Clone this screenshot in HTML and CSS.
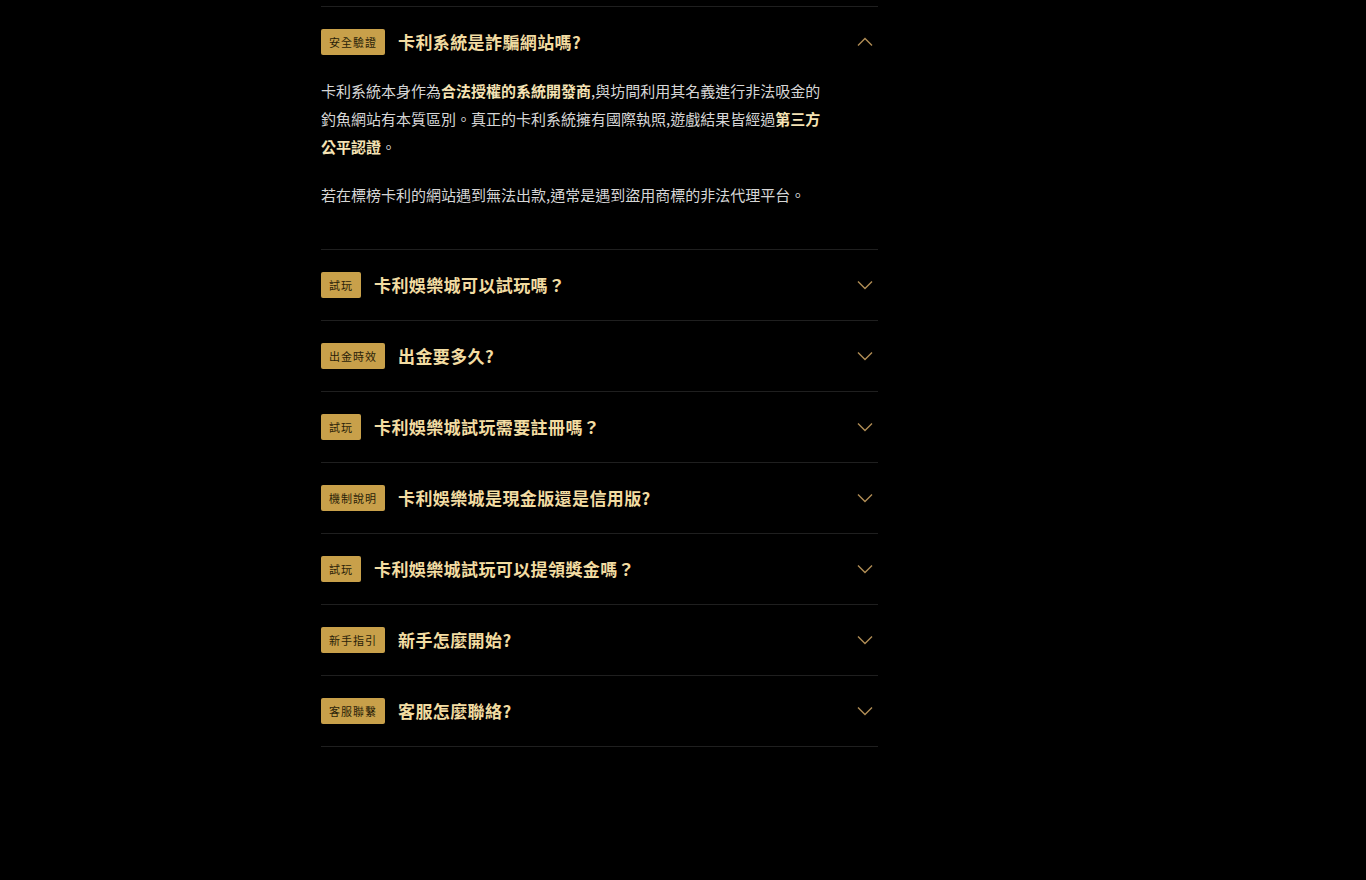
FILE: index.html
```html
<!DOCTYPE html>
<html lang="zh-TW">
<head>
<meta charset="utf-8">
<title>FAQ</title>
<link rel="stylesheet" href="styles.css">
</head>
<body>
<main class="page">
  <section class="faq">
    <div class="item open">
      <div class="head">
        <span class="badge">安全驗證</span>
        <h3 class="title">卡利系統是詐騙網站嗎?</h3>
        <svg class="chev" viewBox="0 0 16 10" width="16" height="10"><path d="M1 8.5 L8 1.5 L15 8.5"/></svg>
      </div>
      <div class="body">
        <p>卡利系統本身作為<strong>合法授權的系統開發商</strong>,與坊間利用其名義進行非法吸金的釣魚網站有本質區別。真正的卡利系統擁有國際執照,遊戲結果皆經過<strong>第三方公平認證</strong>。</p>
        <p>若在標榜卡利的網站遇到無法出款,通常是遇到盜用商標的非法代理平台。</p>
      </div>
    </div>
    <div class="item">
      <div class="head">
        <span class="badge">試玩</span>
        <h3 class="title">卡利娛樂城可以試玩嗎？</h3>
        <svg class="chev" viewBox="0 0 16 10" width="16" height="10"><path d="M1 1.5 L8 8.5 L15 1.5"/></svg>
      </div>
    </div>
    <div class="item">
      <div class="head">
        <span class="badge">出金時效</span>
        <h3 class="title">出金要多久?</h3>
        <svg class="chev" viewBox="0 0 16 10" width="16" height="10"><path d="M1 1.5 L8 8.5 L15 1.5"/></svg>
      </div>
    </div>
    <div class="item">
      <div class="head">
        <span class="badge">試玩</span>
        <h3 class="title">卡利娛樂城試玩需要註冊嗎？</h3>
        <svg class="chev" viewBox="0 0 16 10" width="16" height="10"><path d="M1 1.5 L8 8.5 L15 1.5"/></svg>
      </div>
    </div>
    <div class="item">
      <div class="head">
        <span class="badge">機制說明</span>
        <h3 class="title">卡利娛樂城是現金版還是信用版?</h3>
        <svg class="chev" viewBox="0 0 16 10" width="16" height="10"><path d="M1 1.5 L8 8.5 L15 1.5"/></svg>
      </div>
    </div>
    <div class="item">
      <div class="head">
        <span class="badge">試玩</span>
        <h3 class="title">卡利娛樂城試玩可以提領獎金嗎？</h3>
        <svg class="chev" viewBox="0 0 16 10" width="16" height="10"><path d="M1 1.5 L8 8.5 L15 1.5"/></svg>
      </div>
    </div>
    <div class="item">
      <div class="head">
        <span class="badge">新手指引</span>
        <h3 class="title">新手怎麼開始?</h3>
        <svg class="chev" viewBox="0 0 16 10" width="16" height="10"><path d="M1 1.5 L8 8.5 L15 1.5"/></svg>
      </div>
    </div>
    <div class="item">
      <div class="head">
        <span class="badge">客服聯繫</span>
        <h3 class="title">客服怎麼聯絡?</h3>
        <svg class="chev" viewBox="0 0 16 10" width="16" height="10"><path d="M1 1.5 L8 8.5 L15 1.5"/></svg>
      </div>
    </div>
  </section>
</main>
</body>
</html>
```

FILE: styles.css
```css
html, body {
  margin: 0;
  padding: 0;
  background: #000;
  min-height: 100%;
}
body {
  font-family: "Noto Sans CJK TC", "Noto Sans", sans-serif;
  color: #d6d6d6;
}
.page {
  padding: 6px 0 0 321px;
}
.faq {
  width: 557px;
  border-top: 1px solid #1f1f1f;
}
.item {
  border-bottom: 1px solid #1f1f1f;
}
.head {
  display: flex;
  align-items: center;
  height: 26px;
  padding: 22px 0;
}
.badge {
  display: inline-flex;
  align-items: center;
  height: 26px;
  padding: 0 8px;
  background: #c8a04a;
  color: #2a1e08;
  font-size: 11px;
  letter-spacing: 1px;
  border-radius: 2px;
  flex: none;
}
.title {
  margin: 0 0 0 13px;
  font-size: 17px;
  font-weight: 700;
  letter-spacing: 0.4px;
  color: #f2dca2;
  flex: 1;
  line-height: 26px;
}
.chev {
  flex: none;
  margin-right: 5px;
  fill: none;
  stroke: #b08d55;
  stroke-width: 1.4;
}
.body {
  max-width: 508px;
  padding: 0 0 40px;
  font-size: 15px;
  line-height: 28px;
}
.body p {
  margin: 0 0 20px;
}
.body p:last-child {
  margin-bottom: 0;
}
.body strong {
  color: #f5e3b4;
  font-weight: 700;
}
```
